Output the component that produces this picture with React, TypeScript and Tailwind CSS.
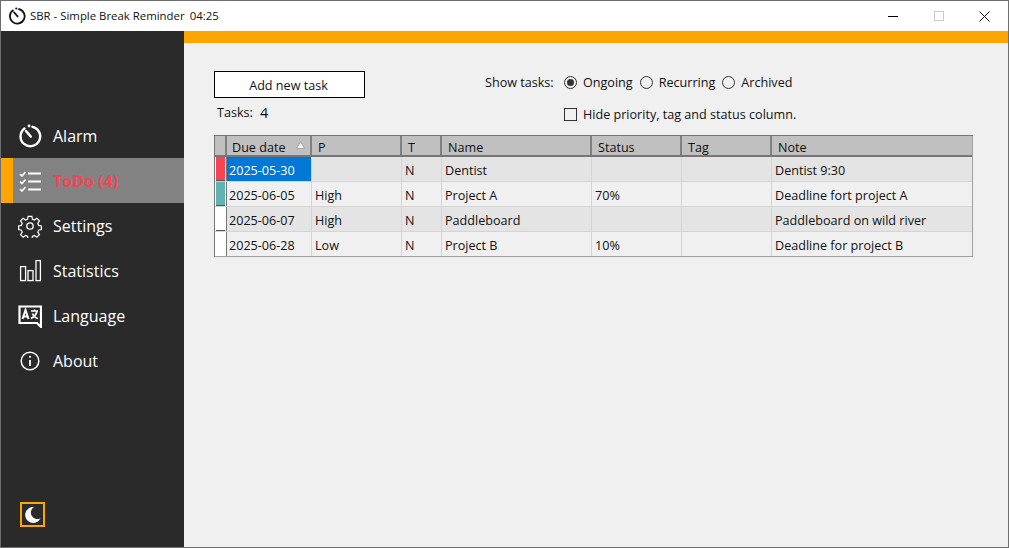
const FONT = "font-['Open_Sans','Noto_Sans',sans-serif]";

const navIconClass = "h-[24px] w-[24px] shrink-0 text-white";

function AlarmIcon({ className }: { className: string }) {
  return (
    <svg viewBox="0 0 24 24" className={className} fill="none" stroke="currentColor" strokeWidth="2.400">
      <path d="M6.500 4.500A9.800 9.800 0 1 0 14.500 2.800" strokeLinecap="round" />
      <path d="M8 7l4.800 5.600" strokeWidth="2.400" strokeLinecap="round" />
      <circle cx="11" cy="2" r="1.400" fill="currentColor" stroke="none" />
    </svg>
  );
}

function TodoIcon() {
  return (
    <svg viewBox="0 0 24 24" className={navIconClass} fill="none" stroke="currentColor">
      <path d="M2 5l2 2 3.500-4M2 12.500l2 2 3.500-4M2 20l2 2 3.500-4" strokeWidth="1.600" />
      <path d="M10 4.500h13M10 12.500h13M10 20.500h13" strokeWidth="2" />
    </svg>
  );
}

function SettingsIcon() {
  return (
    <svg viewBox="0 0 24 24" className={navIconClass} fill="none" stroke="currentColor" strokeWidth="1.300">
      <circle cx="12" cy="12" r="3.200" />
      <path d="M10 1.500h4l.6 3.100 2.100.9 2.700-1.800 2.800 2.800-1.800 2.700.9 2.100 3 .6v4l-3 .6-.9 2.100 1.800 2.700-2.800 2.800-2.700-1.800-2.100.9-.6 3h-4l-.6-3-2.100-.9-2.700 1.800-2.800-2.800 1.800-2.700-.9-2.100-3-.6v-4l3-.6.9-2.100-1.800-2.700 2.800-2.800 2.700 1.800 2.100-.9z" transform="translate(0.900 0.900) scale(0.925)" />
    </svg>
  );
}

function StatsIcon() {
  return (
    <svg viewBox="0 0 24 24" className={navIconClass} fill="none" stroke="currentColor" strokeWidth="1.300">
      <rect x="2.600" y="7.600" width="5" height="14" />
      <rect x="10" y="11.600" width="5" height="10" />
      <rect x="18" y="1.600" width="4.400" height="20" />
    </svg>
  );
}

function LanguageIcon() {
  return (
    <svg viewBox="0 0 24 24" className={navIconClass} fill="none" stroke="currentColor">
      <path d="M1.500 2.500h21.500v20.500l-4-4H1.500z" strokeWidth="2.200" />
      <path d="M4.500 15l3-9 3 9M5.500 12.500h4" strokeWidth="2" />
      <path d="M13 7h7M16.500 5.500v1.500M19 7c-.5 3-3 6-6 7.500M14.500 9.500c1 2.500 3 4.500 5.500 5" strokeWidth="1.700" />
    </svg>
  );
}

function AboutIcon() {
  return (
    <svg viewBox="0 0 24 24" className={navIconClass} fill="none" stroke="currentColor" strokeWidth="1.500">
      <circle cx="12" cy="12" r="8.800" />
      <path d="M12 11v6" strokeWidth="1.800" />
      <circle cx="12" cy="7.800" r="1.100" fill="currentColor" stroke="none" />
    </svg>
  );
}

const navItems = [
  { label: "Alarm", icon: <AlarmIcon className={navIconClass} /> },
  { label: "ToDo (4)", icon: <TodoIcon />, active: true },
  { label: "Settings", icon: <SettingsIcon /> },
  { label: "Statistics", icon: <StatsIcon /> },
  { label: "Language", icon: <LanguageIcon /> },
  { label: "About", icon: <AboutIcon /> },
];

const columns = [
  { label: "Due date", w: "w-[85px]" },
  { label: "P", w: "w-[90px]" },
  { label: "T", w: "w-[40px]" },
  { label: "Name", w: "w-[150px]" },
  { label: "Status", w: "w-[90px]" },
  { label: "Tag", w: "w-[90px]" },
  { label: "Note", w: "flex-1" },
];

const rows = [
  { marker: "bg-[#f94355]", cells: ["2025-05-30", "", "N", "Dentist", "", "", "Dentist 9:30"] },
  { marker: "bg-[#5fb3b3]", cells: ["2025-06-05", "High", "N", "Project A", "70%", "", "Deadline fort project A"] },
  { marker: "bg-white", cells: ["2025-06-07", "High", "N", "Paddleboard", "", "", "Paddleboard on wild river"] },
  { marker: "bg-white", cells: ["2025-06-28", "Low", "N", "Project B", "10%", "", "Deadline for project B"] },
];

function Radio({ label, checked }: { label: string; checked?: boolean }) {
  return (
    <div className="flex items-center gap-[6px]">
      <span className="flex h-[13px] w-[13px] items-center justify-center rounded-full border border-[#333] bg-[#f0f0f0]">
        {checked && <span className="h-[7px] w-[7px] rounded-full bg-[#333]" />}
      </span>
      <span className="pt-[3px]">{label}</span>
    </div>
  );
}

function TaskTable() {
  return (
    <div className="mt-[12px] w-[759px] border border-[#767676] border-b-[#a0a0a0] border-r-[#a0a0a0] text-[12.6px] text-[#111]">
      <div className="flex h-[21px] border-b-2 border-[#767676] bg-[#c0c0c0]">
        <div className="w-[10px] shrink-0 bg-[#c0c0c0]" />
        {columns.map((col, c) => (
          <div
            key={col.label}
            className={`${col.w} relative flex items-center border-l-2 border-[#808080] pt-[6px] ${c === 0 ? "pl-[5px]" : "pl-[6px]"}`}
          >
            {col.label}
            {col.label === "Due date" && (
              <svg viewBox="0 0 9 8" className="absolute right-[5px] top-[5px] h-[8px] w-[9px]">
                <path d="M4.500 .5L8.500 7.500H.5z" fill="#f4f4f4" stroke="#9a9a9a" strokeWidth="0.800" />
              </svg>
            )}
          </div>
        ))}
      </div>
      {rows.map((row, i) => (
        <div
          key={row.cells[0]}
          className={`flex h-[25px] border-b border-[#d4d4d4] last:h-[24px] last:border-b-0 ${i % 2 === 0 ? "bg-[#e4e4e4]" : "bg-[#f0f0f0]"}`}
        >
          <div className="flex w-[12px] shrink-0 border-r border-[#767676] bg-white px-[1px]">
            <div className={`w-full ${row.marker} ${i < 3 ? "border-b border-[#555]" : ""}`} />
          </div>
          {row.cells.map((cell, c) => (
            <div
              key={c}
              className={`${c === 0 ? "w-[84px]" : columns[c].w} flex items-center overflow-hidden whitespace-nowrap border-[#d4d4d4] pt-[5px] ${c === 0 ? "pl-[2px]" : "border-l pl-[3px]"} ${i === 0 && c === 0 ? "bg-[#0078d7] text-white" : ""}`}
            >
              {cell}
            </div>
          ))}
        </div>
      ))}
    </div>
  );
}

export default function App() {
  return (
    <div className={`${FONT} flex h-[548px] w-[1009px] flex-col overflow-hidden border border-[#6e6e6e] bg-[#f0f0f0] text-[12.6px] text-[#111]`}>
      {/* title bar */}
      <div className="flex h-[30px] shrink-0 items-center bg-white">
        <AlarmIcon className="ml-[7px] h-[18px] w-[18px] text-[#111]" />
        <span className="ml-[4px] text-[11.4px]">SBR - Simple Break Reminder</span>
        <span className="ml-[5px] text-[11.4px]">04:25</span>
        <div className="ml-auto flex items-center">
          <div className="flex w-[46px] justify-center">
            <div className="h-px w-[10px] bg-black" />
          </div>
          <div className="flex w-[46px] justify-center">
            <div className="h-[10px] w-[10px] border border-[#cccccc]" />
          </div>
          <div className="flex w-[46px] justify-center pr-[1px]">
            <svg viewBox="0 0 11 11" className="h-[11px] w-[11px]" stroke="#111" strokeWidth="1">
              <path d="M.5 .5l10 10M10.500 .5l-10 10" />
            </svg>
          </div>
        </div>
      </div>

      <div className="flex min-h-0 flex-1">
        {/* sidebar */}
        <aside className="flex w-[183px] shrink-0 flex-col bg-[#2b2a2b] pb-[20px] pt-[82px]">
          {navItems.map((item) => (
            <div
              key={item.label}
              className={`flex h-[45px] items-center pt-[1px] text-[16px] ${item.active ? "border-l-[12px] border-[#ffa500] bg-[#828282] pl-[5px] font-bold text-[#f94355]" : "pl-[17px] text-white"}`}
            >
              {item.icon}
              <span className="ml-[11px]">{item.label}</span>
            </div>
          ))}
          <div className="mt-auto ml-[19px] flex h-[25px] w-[25px] items-center justify-center border-2 border-[#ffa500]">
            <svg viewBox="0 0 16 16" className="h-[17px] w-[17px]">
              <path d="M9.500 1A7.500 7.500 0 1 0 15.500 11.500 5.900 5.900 0 0 1 9.500 1z" fill="#fff" />
            </svg>
          </div>
        </aside>

        {/* main */}
        <main className="flex min-w-0 flex-1 flex-col">
          <div className="h-[12px] shrink-0 bg-[#ffa500]" />
          <div className="pl-[30px] pt-[28px]">
            <div className="flex">
              <div className="w-[151px] shrink-0">
                <div className="flex h-[27px] items-center justify-center border border-black bg-white pr-[2px] pt-[3px]">
                  Add new task
                </div>
                <div className="mt-[6px] flex h-[18px] items-center pl-[3px]">
                  Tasks:
                  <span className="ml-[7px] text-[14.5px]">4</span>
                </div>
              </div>
              <div className="ml-[120px] pt-[2px]">
                <div className="flex h-[18px] items-center">
                  <span className="w-[79px] pt-[3px]">Show tasks:</span>
                  <div className="flex items-center gap-[7px]">
                    <Radio label="Ongoing" checked />
                    <Radio label="Recurring" />
                    <Radio label="Archived" />
                  </div>
                </div>
                <div className="ml-[79px] mt-[14px] flex h-[18px] items-center gap-[6px]">
                  <span className="h-[13px] w-[13px] border border-[#333] bg-[#f0f0f0]" />
                  <span className="pt-[3px]">Hide priority, tag and status column.</span>
                </div>
              </div>
            </div>
            <TaskTable />
          </div>
        </main>
      </div>
    </div>
  );
}
